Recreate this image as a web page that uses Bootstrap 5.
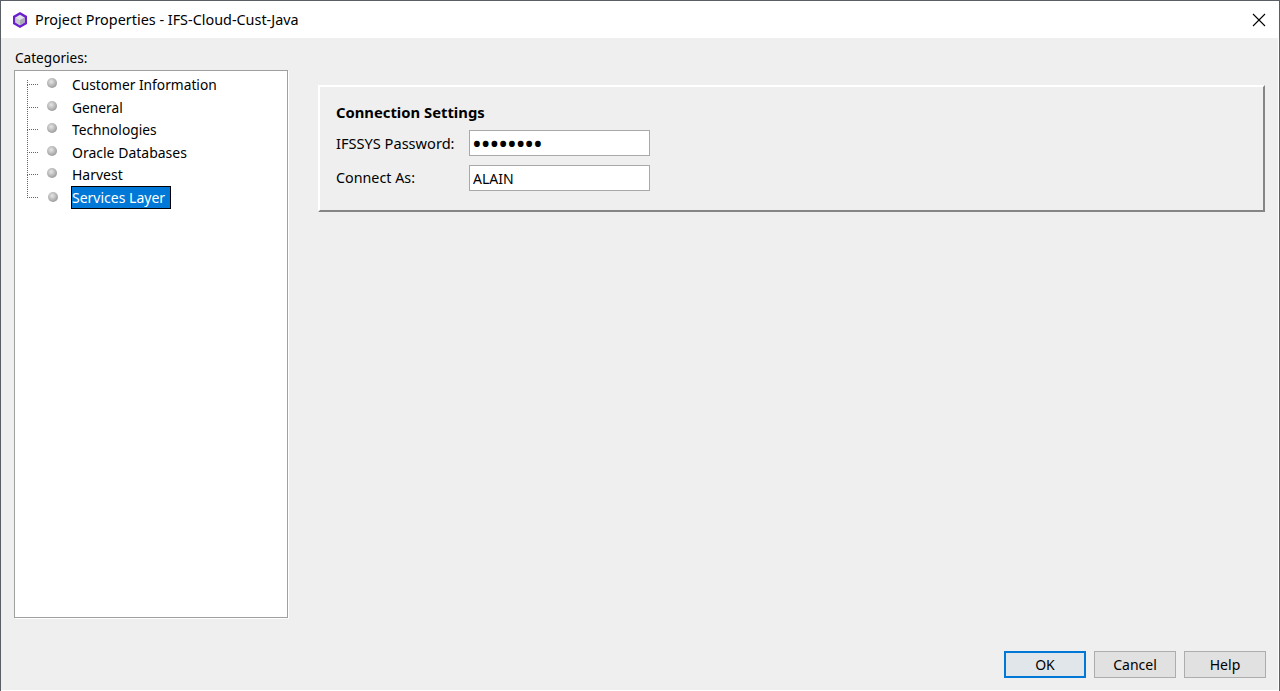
<!DOCTYPE html>
<html lang="en">
<head>
<meta charset="utf-8">
<title>Project Properties - IFS-Cloud-Cust-Java</title>
<link href="https://cdn.jsdelivr.net/npm/bootstrap@5.3.0/dist/css/bootstrap.min.css" rel="stylesheet">
<style>
html,body{height:691px;overflow:hidden}
body{font-family:"Noto Sans","DejaVu Sans",sans-serif;font-size:14px;line-height:20px;color:#000;background:#fff}
.win{height:691px;border-top:1px solid #5a5f66;border-left:1px solid #5a5f66;border-right:1px solid #5a5f66;padding-bottom:1px}
.titlebar{height:37px;background:#fff;padding-left:11px}
.titletext{font-size:14.4px}
.titlebar svg.logo{margin-right:7px}
.closex{margin-right:13px}
.dlg{background:#efefef;flex:1 1 auto;min-height:0;margin-right:1px;padding:0 12px 11px 13px}
.leftcol{width:274px;margin-right:30px}
.catlabel{height:32px;padding-top:10px;margin-left:1px;font-size:13.6px}
.treebox{height:548px;background:#fff;border:1px solid #a0a0a0;box-shadow:1px 1px 0 #fff;padding-top:3px;margin:0}
.treerow{height:22.5px;position:relative;padding-left:57px;line-height:21px;margin:0;font-size:13.75px}
.treerow.wider{font-size:14px}
.treerow::before{content:"";position:absolute;left:12px;top:-12px;width:11px;height:23px;border-left:1px dotted #666;border-bottom:1px dotted #666}
.treerow:first-child::before{top:6px;height:5px}
.knob{position:absolute;left:32px;top:4px;width:10px;height:10px;border-radius:50%;background:radial-gradient(circle at 42% 38%,#e6e6e6 0,#b4b4b4 50%,#7f7f7f 100%)}
.knob.lastknob{left:33px;top:5px}
.treeitem{display:inline-block;padding:0 3px 0 0;line-height:21px}
.treeitem.sel{background:#0078d7;color:#fff;outline:1px solid #000;padding:0 5px 0 0;height:21px}
.rightcol{flex:1 1 auto;min-width:0;padding-top:47px}
.panelbox{height:127px;border:2px solid;border-color:#fff #858585 #858585 #fff;padding:15px 16px;width:947px}
.paneltitle{font-weight:700;font-size:14.8px;line-height:20px;height:28px;margin:0}
.fieldrow{height:35px;margin:0}
.fieldlabel{width:133px;line-height:26px;font-size:14.6px}
.fieldlabel.tighter{font-size:14.3px}
.fieldinput.form-control{width:181px;height:26px;border:1px solid #a9a9a9;border-radius:0;padding:0 3px;font:inherit;color:#000;background:#fff;box-shadow:none}
.fieldinput.pw.form-control{font-size:26px;letter-spacing:-1.05px;padding:0 2px}
.footbar{height:28px;margin-top:auto;gap:8px}
.dlgbtn.btn{width:82px;height:27px;padding:0;border:1px solid #adadad;border-radius:0;background:#e1e1e1;color:#000;font-size:14px;line-height:24px}
.dlgbtn.btn.dflt{border:2px solid #0078d7;background:#e1e6ea;line-height:22px}
</style>
</head>
<body>
<div class="win d-flex flex-column">
  <div class="titlebar d-flex align-items-center">
    <svg class="logo" width="16" height="18" viewBox="0 0 16 18"><path d="M8 1 15 5v8l-7 4-7-4V5z" fill="#6a21cc"/><path d="M8 3.800l4.600 2.700v5L8 14.200l-4.600-2.700v-5z" fill="#e4e4ea"/><path d="M8 9 12.600 6.500v5L8 14.200z" fill="#a9a9b8"/><path d="M8 9v5.200l-4.600-2.700v-5z" fill="#c9c9d2"/></svg>
    <span class="titletext">Project Properties - IFS-Cloud-Cust-Java</span>
    <svg class="closex ms-auto" width="14" height="14" viewBox="0 0 14 14"><path d="M1 1 13 13M13 1 1 13" stroke="#000" stroke-width="1.100" fill="none"/></svg>
  </div>
  <div class="dlg d-flex flex-column">
    <div class="d-flex">
      <div class="leftcol">
        <div class="catlabel">Categories:</div>
        <div class="treebox">
          <div class="treerow"><span class="knob"></span><span class="treeitem">Customer Information</span></div>
          <div class="treerow"><span class="knob"></span><span class="treeitem">General</span></div>
          <div class="treerow"><span class="knob"></span><span class="treeitem">Technologies</span></div>
          <div class="treerow wider"><span class="knob"></span><span class="treeitem">Oracle Databases</span></div>
          <div class="treerow wider"><span class="knob"></span><span class="treeitem">Harvest</span></div>
          <div class="treerow wider"><span class="knob lastknob"></span><span class="treeitem sel">Services Layer</span></div>
        </div>
      </div>
      <div class="rightcol">
        <div class="panelbox">
          <div class="paneltitle">Connection Settings</div>
          <div class="fieldrow d-flex"><label class="fieldlabel">IFSSYS Password:</label><input class="fieldinput pw form-control" type="password" value="password"></div>
          <div class="fieldrow d-flex"><label class="fieldlabel tighter">Connect As:</label><input class="fieldinput form-control" type="text" value="ALAIN"></div>
        </div>
      </div>
    </div>
    <div class="footbar d-flex justify-content-end">
      <button class="dlgbtn dflt btn" type="button">OK</button>
      <button class="dlgbtn btn" type="button">Cancel</button>
      <button class="dlgbtn btn" type="button">Help</button>
    </div>
  </div>
</div>
<script src="https://cdn.jsdelivr.net/npm/bootstrap@5.3.0/dist/js/bootstrap.bundle.min.js"></script>
</body>
</html>
